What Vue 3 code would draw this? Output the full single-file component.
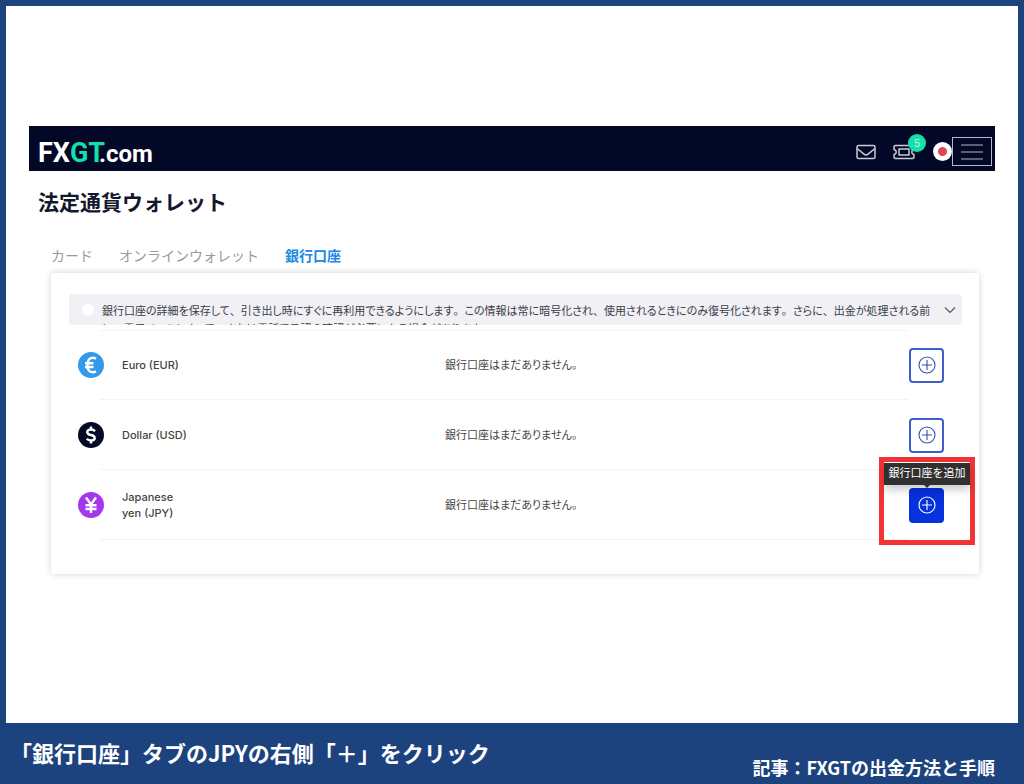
<template>
  <div class="frame">
    <main class="stage">
      <header class="topbar">
        <a href="#" class="logo"><span>FX</span><span class="logo-accent">GT</span><span class="logo-domain">.com</span></a>
        <nav class="topbar-actions">
          <button class="icon-button" aria-label="メール">
            <svg width="20" height="16" viewBox="0 0 20 16" fill="none" stroke="#c9ccd6" stroke-width="1.5" stroke-linejoin="round">
              <rect x="1" y="1.5" width="18" height="13" rx="1.5" />
              <path d="M1 4.5L8 10.2Q10 11.8 12 10.2L19 4.5" />
            </svg>
          </button>
          <button class="icon-button tickets" aria-label="チケット">
            <svg width="22" height="16" viewBox="0 0 22 16" fill="none" stroke="#c9ccd6" stroke-width="1.5" stroke-linejoin="round">
              <path d="M2.5 1.5H19.5Q21 1.5 21 3V5.5Q18.8 6 18.8 8T21 10.5V13Q21 14.5 19.5 14.5H2.5Q1 14.5 1 13V10.5Q3.2 10 3.2 8T1 5.5V3Q1 1.5 2.5 1.5Z" />
              <rect x="6" y="5" width="10" height="6" />
            </svg>
            <span class="badge">5</span>
          </button>
          <button class="flag" aria-label="日本語"></button>
          <button class="burger" aria-label="メニュー">
            <svg width="22" height="16" viewBox="0 0 22 16" stroke="#b4b8c6" stroke-width="1.2">
              <path d="M0 1H22M0 8H22M0 15H22" />
            </svg>
          </button>
        </nav>
      </header>

      <h1>法定通貨ウォレット</h1>

      <div class="tabs" role="tablist">
        <button
          v-for="tab in tabs"
          :key="tab"
          role="tab"
          class="tab"
          :class="{ active: tab === activeTab }"
          :aria-selected="tab === activeTab"
          @click="activeTab = tab"
        >{{ tab }}</button>
      </div>

      <section class="card">
        <div class="notice">
          <span class="notice-dot"></span>
          <p>
            <template v-for="(line, l) in noticeLines" :key="l">
              <br v-if="l > 0">
              <span v-for="(part, i) in line" :key="i" :class="{ kana: i % 2 === 0 }">{{ part }}</span>
            </template>
          </p>
          <button class="notice-toggle" aria-label="開く">
            <svg width="12" height="8" viewBox="0 0 12 8" fill="none" stroke="#555866" stroke-width="1.2">
              <path d="M1 1.5L6 6.5L11 1.5" />
            </svg>
          </button>
        </div>

        <table class="accounts">
          <colgroup>
            <col class="col-icon">
            <col class="col-name">
            <col>
            <col class="col-action">
          </colgroup>
          <tbody>
            <tr v-for="c in currencies" :key="c.code">
              <td class="cell-icon">
                <span class="coin" :class="c.code">
                  <svg width="26" height="26" viewBox="0 0 26 26" fill="none" stroke="#fff" stroke-width="2.4">
                    <path :d="c.icon" />
                  </svg>
                </span>
              </td>
              <td><span class="name">{{ c.name }}</span></td>
              <td class="kana">銀行口座はまだありません。</td>
              <td>
                <div class="action">
                  <button class="add" :class="{ hovered: c.code === hovered }" aria-label="銀行口座を追加">
                    <svg width="18" height="18" viewBox="0 0 18 18" fill="none" stroke="currentColor" stroke-width="1.1">
                      <circle cx="9" cy="9" r="8" />
                      <path d="M9 4V14M4 9H14" />
                    </svg>
                  </button>
                  <template v-if="c.code === hovered">
                    <span class="highlight"></span>
                    <span class="tooltip" role="tooltip">銀行口座を追加</span>
                  </template>
                </div>
              </td>
            </tr>
          </tbody>
        </table>
      </section>
    </main>

    <footer class="caption">
      <p class="caption-title">「銀行口座」タブのJPYの右側「＋」をクリック</p>
      <p class="caption-source">記事：FXGTの出金方法と手順</p>
    </footer>
  </div>
</template>

<script setup>
import { ref } from 'vue';

const tabs = ['カード', 'オンラインウォレット', '銀行口座'];
const activeTab = ref('銀行口座');
const hovered = ref('jpy');

// punctuation is split off so that it keeps its full width
const noticeLines = [
  '銀行口座の詳細を保存して、引き出し時にすぐに再利用できるようにします。この情報は常に暗号化され、使用されるときにのみ復号化されます。さらに、出金が処理される前',
  'に、電子メールによって、または電話で承認の確認が必要になる場合があります。',
].map(line => line.split(/([、。])/));

const currencies = [
  {
    code: 'eur',
    name: 'Euro (EUR)',
    icon: 'M18 6.8Q16.5 5.8 14.5 5.8C11 5.8 9.5 9 9.5 13S11 20.2 14.5 20.2Q16.5 20.2 18 19.2M7 11.2H15.5M7 15H15.5',
  },
  {
    code: 'usd',
    name: 'Dollar (USD)',
    icon: 'M17 9.3Q15.5 7.5 13 7.5C8 7.5 8 12.2 13 13S18 18.5 13 18.5Q10.3 18.5 8.8 16.8M13 4.5V7.5M13 18.5V21.5',
  },
  {
    code: 'jpy',
    name: 'Japanese yen (JPY)',
    icon: 'M8 5.5L13 12.5L18 5.5M13 12.5V21M7.5 13.3H18.5M7.5 17H18.5',
  },
];
</script>

<style>
body {
  margin: 0;
}
</style>

<style scoped>
* {
  box-sizing: border-box;
}

.frame {
  display: flex;
  flex-direction: column;
  min-height: 100vh;
  padding: 6px 6px 0;
  background: #1d437f;
  font-family: Inter, "Noto Sans CJK JP", sans-serif;
  color: #444;
}

.stage {
  flex: 1;
  padding: 120px 23px 24px;
  background: #fff;
}

button {
  padding: 0;
  border: none;
  background: none;
  font-family: inherit;
  cursor: pointer;
}

svg {
  display: block;
}

h1 {
  margin: 16px 0 0 9px;
  font-size: 21px;
  line-height: 32px;
  font-weight: 700;
  color: #14182c;
}

.kana {
  font-feature-settings: "palt";
}

.topbar {
  display: flex;
  justify-content: space-between;
  align-items: center;
  height: 45px;
  padding: 0 3px 0 9px;
  background: #020825;
}

.logo {
  display: flex;
  align-items: baseline;
  margin-top: 10px;
  font-family: Roboto, sans-serif;
  font-size: 27px;
  line-height: 32px;
  font-weight: 700;
  color: #fff;
  text-decoration: none;
}

.logo-accent {
  color: #14dfa9;
}

.logo-domain {
  margin-left: -6px;
  font-size: 24px;
}

.topbar-actions {
  display: flex;
  align-items: center;
  margin-top: 6px;
}

.icon-button {
  position: relative;
  margin-right: 17px;
}

.tickets {
  margin-right: 18px;
}

.badge {
  position: absolute;
  top: -10px;
  right: -11px;
  width: 18px;
  height: 18px;
  border-radius: 50%;
  background: #14dfa9;
  color: #b5f8e3;
  font-size: 11px;
  line-height: 18px;
  text-align: center;
}

.flag {
  width: 19px;
  height: 19px;
  border-radius: 50%;
  background: radial-gradient(circle, #df4658 4px, #fff 5px);
}

.burger {
  display: flex;
  align-items: center;
  justify-content: center;
  width: 40px;
  height: 29px;
  border: 1px solid #b4b8c6;
}

.tabs {
  display: flex;
  gap: 26px;
  margin: 25px 0 0 22px;
}

.tab {
  height: 24px;
  font-size: 14px;
  line-height: 24px;
  color: #999;
}

.tab.active {
  font-weight: 700;
  color: #1b87e6;
}

.card {
  margin: 5px 16px 0 22px;
  padding: 21px 17px 34px 18px;
  border-radius: 3px;
  background: #fff;
  box-shadow: 0 0 7px rgba(0, 0, 0, 0.18);
}

.notice {
  display: flex;
  align-items: flex-start;
  height: 31px;
  padding: 0 7px 0 13px;
  overflow: hidden;
  border-radius: 4px;
  background: #f0f0f5;
}

.notice-dot {
  flex: none;
  width: 12px;
  height: 12px;
  margin: 10px 8px 0 0;
  border-radius: 50%;
  background: #fff;
}

.notice p {
  flex: 1;
  margin: 8px 0 0;
  font-size: 11px;
  line-height: 18px;
  white-space: nowrap;
  color: #3b3d48;
}

.notice-toggle {
  margin: 12px 0 0 14px;
}

.accounts {
  width: 100%;
  margin-top: 5px;
  border-collapse: collapse;
  table-layout: fixed;
  font-size: 11px;
  line-height: 16px;
  background: linear-gradient(#f4f4f4, #f4f4f4) 31px 0 / calc(100% - 85px) 1px no-repeat;
}

.accounts tr {
  height: 70px;
  background: linear-gradient(#f4f4f4, #f4f4f4) 31px 100% / calc(100% - 85px) 1px no-repeat;
}

.accounts td {
  padding: 0;
}

.col-icon {
  width: 53px;
}

.col-name {
  width: 323px;
}

.col-action {
  width: 53px;
}

.accounts .cell-icon {
  padding-left: 9px;
}

.coin {
  display: block;
  width: 26px;
  height: 26px;
  border-radius: 50%;
}

.eur {
  background: #3399ea;
}

.usd {
  background: #050b27;
}

.jpy {
  background: #a437ee;
}

.name {
  display: block;
  max-width: 70px;
  font-weight: 500;
}

.action {
  position: relative;
  width: 35px;
}

.add {
  display: flex;
  align-items: center;
  justify-content: center;
  width: 35px;
  height: 35px;
  border: 2px solid #3e5fcb;
  border-radius: 4px;
  color: #3450b4;
}

.add.hovered {
  border-color: #0631dc;
  background: #0631dc;
  color: #fff;
}

.highlight {
  position: absolute;
  top: -31px;
  left: -30px;
  width: 96px;
  height: 88px;
  border: 5px solid #f23335;
}

.tooltip {
  position: absolute;
  top: -25px;
  left: -25px;
  width: 86px;
  height: 22px;
  background: #303030;
  box-shadow: 0 5px 8px rgba(0, 0, 0, 0.2);
  color: #fff;
  line-height: 21px;
  text-align: center;
  white-space: nowrap;
}

.tooltip::after {
  content: "";
  position: absolute;
  top: 100%;
  left: 40px;
  border: 3px solid transparent;
  border-top-color: #303030;
}

.caption {
  display: flex;
  justify-content: space-between;
  height: 61px;
  padding: 0 23px 0 4px;
  font-family: "Noto Sans CJK JP", sans-serif;
  font-weight: 700;
  color: #fff;
}

.caption p {
  margin: 0;
}

.caption-title {
  padding-top: 13px;
  font-size: 22px;
  line-height: 32px;
}

.caption-source {
  padding-top: 28px;
  font-size: 18px;
  line-height: 32px;
}
</style>
